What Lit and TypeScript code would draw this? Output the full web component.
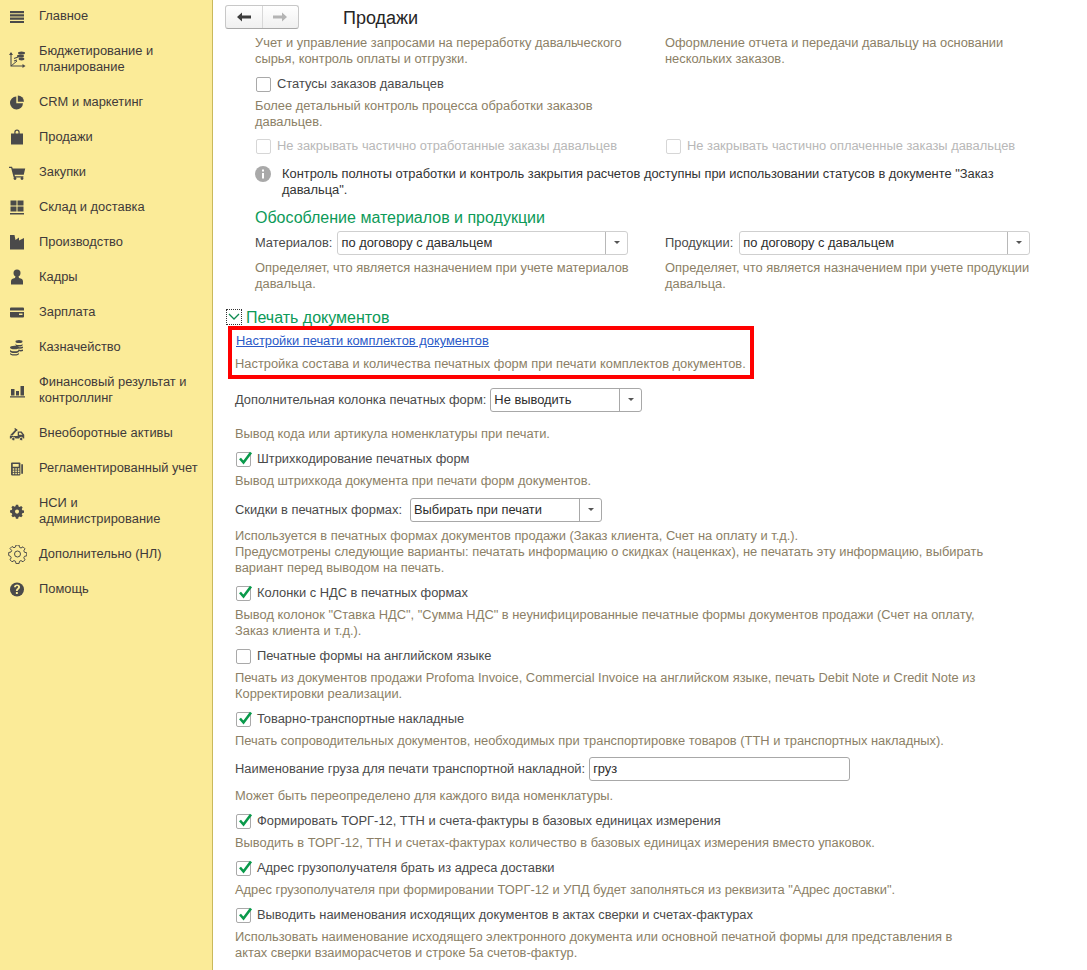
import { LitElement, html, css, svg } from "lit";
import { customElement } from "lit/decorators.js";

const icons: Record<string, unknown> = {
  menu: svg`<path d="M2 4.500h14v2.200H2zM2 7.800h14V10H2zM2 11.100h14v2.200H2zM2 14.400h14v2.200H2z" transform="translate(0 -.5)"/>`,
  budget: svg`<path d="M3 3v13h13" fill="none" stroke="currentColor" stroke-width="1.100"/><path d="M1 5l2-3 2 3zM14.500 14l3 2-3 2z"/><path d="M3 16l6-5" stroke="currentColor" stroke-width="1"/><path d="M6 8.500l4-1.500M6 11l3-1" stroke="currentColor" stroke-width="1.200"/><ellipse cx="13.500" cy="3" rx="3.500" ry="1.500"/><ellipse cx="12.500" cy="6" rx="3.500" ry="1.500"/><ellipse cx="13.500" cy="9" rx="3" ry="1.400"/>`,
  pie: svg`<path d="M8.300 3.500a6.500 6.500 0 1 0 6.700 6.700H8.300z"/><path d="M9.800 2.500v6.200h6.200a6.200 6.200 0 0 0-6.200-6.200z"/>`,
  bag: svg`<path d="M3 5.500h3.300V4.200a2.700 2.700 0 0 1 5.400 0v1.300H15v11H3z"/><path d="M7.600 5.500h2.800V4.200a1.400 1.400 0 0 0-2.800 0z" fill="#fbeb98"/>`,
  cart: svg`<path d="M0 3h3.400l.7 2H18l-1.600 7H6.200l.4 1.600H16V15H5.200L2.400 4.400H0z" transform="translate(1 1) scale(.9)"/><circle cx="7" cy="15.500" r="1.400"/><circle cx="14" cy="15.500" r="1.400"/>`,
  grid: svg`<path d="M2.500 2.500h6v5h-6zM9.500 2.500h6v5h-6zM2.500 8.500h6v5h-6zM9.500 8.500h6v5h-6zM2 15h14v1.500H2z"/>`,
  factory: svg`<path d="M2 2h4.500l1 5L11 4.500v3L16 5v11.500H2z"/>`,
  person: svg`<circle cx="9" cy="5" r="3.500"/><path d="M7.500 8h3l.5 2c2.500.4 4 1.300 4 3.500v3H3v-3c0-2.200 1.500-3.100 4-3.500z"/>`,
  card: svg`<path d="M3 4.500h12a1 1 0 0 1 1 1v2H2v-2a1 1 0 0 1 1-1zM2 9h14v4.500a1 1 0 0 1-1 1H3a1 1 0 0 1-1-1z"/><path d="M11 10.500h3.500V12H11z" fill="#fbeb98"/>`,
  coins: svg`<ellipse cx="11" cy="3.500" rx="3.500" ry="1.500"/><path d="M7.500 5.500a3.500 1.500 0 0 0 7 0V7a3.500 1.500 0 0 1-7 0zM9 8.500a3.500 1.500 0 0 0 6 0V10a3.500 1.500 0 0 1-6 0zM10.500 11.500a3.500 1.500 0 0 0 4.500 0V13a3.500 1.500 0 0 1-4.500 0z"/><ellipse cx="6.500" cy="9.500" rx="4.500" ry="1.800"/><path d="M2 11.500a4.500 1.800 0 0 0 9 0v1.700a4.500 1.800 0 0 1-9 0zM2 14.500a4.500 1.800 0 0 0 9 0v1.200a4.500 1.800 0 0 1-9 0z"/>`,
  bars: svg`<path d="M3 9.500h3.500V16H3zM8 11.500h3V16H8zM12.500 6.500H16V16h-3.500zM2 16.800h15V18H2z" transform="translate(0 -1.500)"/>`,
  truck: svg`<g transform="translate(1 1.500) scale(.87)"><path d="M1 11.500L8 4l1.600 1.200-5.600 6.300z"/><path d="M7 3l3 2.200-1.200 1L6 4z"/><path d="M10 7h4.500l3 3.500V15H1v-3h9zM11.500 8.300v2.400h4l-2-2.400z"/><circle cx="5" cy="15.500" r="2" stroke="#fbeb98"/><circle cx="14" cy="15.500" r="2" stroke="#fbeb98"/></g>`,
  calc: svg`<g transform="translate(.5 2.700) scale(.85 .76)"><path fill-rule="evenodd" d="M4 1h9a1 1 0 0 1 1 1v15a1 1 0 0 1-1 1H4a1 1 0 0 1-1-1V2a1 1 0 0 1 1-1zm1 2v3.500h7V3zM5 8.500v2h1.800v-2zm3 0v2h1.800v-2zm3 0v2h1.800v-2zM5 11.500v2h1.800v-2zm3 0v2h1.800v-2zm3 0v2h1.800v-2zM5 14.500v2h1.800v-2zm3 0v2h1.800v-2zm3 0v2h1.800v-2z"/><path d="M15 3.500h2V16h-2z"/></g>`,
  gear: svg`<path fill-rule="evenodd" d="M8 1.500h3l.5 2.300 1.500.7 2-1.200 2 2-1.200 2 .7 1.500 2.300.5v3l-2.300.5-.7 1.500 1.200 2-2 2-2-1.200-1.500.7-.5 2.300H8l-.5-2.300-1.500-.7-2 1.200-2-2 1.200-2-.7-1.500L.2 12V9l2.300-.5.700-1.500L2 5l2-2 2 1.200 1.500-.7zM9.500 8a2.700 2.700 0 1 0 0 5.400 2.700 2.700 0 0 0 0-5.400z" transform="translate(1.900 1.600) scale(.75)"/>`,
  gearo: svg`<path fill="none" stroke="currentColor" stroke-width="1" d="M8 1.500h3l.5 2.300 1.500.7 2-1.200 2 2-1.200 2 .7 1.500 2.300.5v3l-2.300.5-.7 1.500 1.200 2-2 2-2-1.200-1.500.7-.5 2.300H8l-.5-2.300-1.500-.7-2 1.200-2-2 1.200-2-.7-1.500L.7 12V9l2.300-.5.700-1.500L2 5l2-2 2 1.200 1.500-.7z" transform="translate(0 -1.500)"/><circle cx="9.500" cy="9" r="3" fill="none" stroke="currentColor"/>`,
  help: svg`<circle cx="9" cy="9.500" r="7"/><path d="M6 7.300c0-1.800 1.300-2.800 3.100-2.800s3 1 3 2.500c0 2.200-2.400 2.200-2.400 4H7.900c0-2.600 2.200-2.700 2.200-4 0-.6-.4-1-1-1-.7 0-1.100.5-1.100 1.300zM7.900 12h1.900v1.900H7.900z" fill="#fbeb98"/>`,
};

const nav: [string, string][] = [
  ["menu", "Главное"],
  ["budget", "Бюджетирование и планирование"],
  ["pie", "CRM и маркетинг"],
  ["bag", "Продажи"],
  ["cart", "Закупки"],
  ["grid", "Склад и доставка"],
  ["factory", "Производство"],
  ["person", "Кадры"],
  ["card", "Зарплата"],
  ["coins", "Казначейство"],
  ["bars", "Финансовый результат и контроллинг"],
  ["truck", "Внеоборотные активы"],
  ["calc", "Регламентированный учет"],
  ["gear", "НСИ и администрирование"],
  ["gearo", "Дополнительно (НЛ)"],
  ["help", "Помощь"],
];

@customElement("app-root")
export class AppRoot extends LitElement {
  static styles = css`
    :host {
      display: flex;
      width: 1087px;
      height: 970px;
      overflow: hidden;
      background: #fff;
      font: 12.880px/16px "Liberation Sans", Arial, sans-serif;
      color: #4a4a4a;
    }
    .side {
      width: 212px;
      flex: none;
      background: #fbeb98;
      border-right: 1px solid #c9b95c;
      overflow: hidden;
    }
    .nav {
      list-style: none;
      margin: -2px 0 0;
      padding: 0;
    }
    .nav li {
      display: flex;
      align-items: center;
      padding: 10px 0 9px 8px;
      color: #3f3a3a;
    }
    .nav li span {
      width: 160px;
    }
    .nav svg {
      width: 19px;
      height: 19px;
      flex: none;
      margin: -2px 12px -2px 0;
      fill: #4a4a4a;
      color: #4a4a4a;
    }
    .main {
      flex: 1;
      min-width: 0;
      overflow: hidden;
    }
    .top {
      height: 35px;
      display: flex;
      align-items: flex-start;
      padding-left: 12px;
      box-sizing: border-box;
    }
    .navbtn {
      margin-top: 5px;
      width: 74px;
      height: 24px;
      box-sizing: border-box;
      display: flex;
      border: 1px solid #c8c8c8;
      border-bottom-color: #a8a8a8;
      border-radius: 3px;
      background: linear-gradient(#fff, #f0f0f0);
    }
    .navbtn span {
      flex: 1;
      display: flex;
      align-items: center;
      justify-content: center;
    }
    .navbtn span + span {
      border-left: 1px solid #d8d8d8;
    }
    .navbtn svg {
      width: 14px;
      height: 10px;
    }
    .title {
      margin: 7px 0 0 44px;
      font-size: 18px;
      line-height: 22px;
      color: #262626;
    }
    .body {
      padding-left: 22px;
    }
    .upper {
      padding-left: 20px;
    }
    .cols {
      display: grid;
      grid-template-columns: 410px 1fr;
    }
    .desc {
      color: #8c7f66;
    }
    .check {
      display: flex;
      align-items: center;
      height: 22px;
      gap: 6px;
    }
    .box {
      width: 15px;
      height: 15px;
      box-sizing: border-box;
      border: 1px solid #a9a9a9;
      border-radius: 2px;
      background: #fff;
      position: relative;
      flex: none;
      margin-left: 1px;
    }
    .box svg {
      position: absolute;
      left: 0;
      top: -3px;
      width: 16px;
      height: 16px;
    }
    .off {
      color: #b8b8b8;
    }
    .off .box {
      border-color: #d6d6d6;
    }
    .info {
      display: flex;
      gap: 11px;
      color: #333;
    }
    .info svg {
      width: 16px;
      height: 16px;
      flex: none;
    }
    h2 {
      margin: 0;
      font-weight: 400;
      font-size: 16px;
      line-height: 22px;
      color: #0d9a58;
    }
    .field {
      display: flex;
      align-items: center;
      gap: 4px;
    }
    .field.g5 { gap: 5px; }
    .field.g6 { gap: 6px; }
    .field.g8 { gap: 8px; }
    .sel {
      height: 24px;
      box-sizing: border-box;
      border: 1px solid #a8a8a8;
      border-radius: 3px;
      display: flex;
      align-items: center;
      padding-left: 3px;
      color: #2c2c2c;
      position: relative;
    }
    .sel.light {
      border-color: #cfcfcf;
    }
    .sel.arrow::after {
      content: "";
      position: absolute;
      right: 0;
      top: 0;
      bottom: 0;
      width: 21px;
      border-left: 1px solid #a8a8a8;
    }
    .sel.light.arrow::after {
      border-left-color: #b8b8b8;
    }
    .sel.arrow::before {
      content: "";
      position: absolute;
      right: 7px;
      top: 9px;
      border: 3px solid transparent;
      border-top: 3px solid #555;
      border-bottom: 0;
    }
    .w-mat { width: 291px; }
    .w-prod { width: 291px; }
    .w-none { width: 152px; }
    .w-sk { width: 192px; }
    .w-in { width: 261px; }
    .grp {
      display: flex;
      align-items: flex-start;
      gap: 4px;
      height: 17px;
      margin-left: -29px;
      margin-top: 17px;
    }
    .grp h2 {
      line-height: 18px;
    }
    .grp .tw {
      width: 16px;
      height: 16px;
      box-sizing: border-box;
      border: 1px dotted #333;
      display: flex;
      align-items: center;
      justify-content: center;
    }
    .grp .tw svg {
      width: 12px;
      height: 8px;
    }
    .red {
      margin: 0 0 0 -7px;
      width: 526px;
      height: 53px;
      box-sizing: border-box;
      border: 4px solid #f00;
      padding: 3px 0 0 3px;
      position: relative;
    }
    .link {
      color: #2a5ac8;
      text-decoration: underline;
      padding-left: 1px;
    }
    .red .desc {
      margin-top: 7px;
    }
    .m2 { margin-top: 2px; }
    .m3 { margin-top: 3px; }
    .m5 { margin-top: 5px; }
    .m6 { margin-top: 6px; }
    .m7 { margin-top: 7px; }
    .m8 { margin-top: 8px; }
    .m9 { margin-top: 9px; }
    .m14 { margin-top: 14px; }
  `;

  private tick() {
    return svg`<svg viewBox="0 0 16 16"><path d="M3 8.500l3.500 4L14 2.500" fill="none" stroke="#0a9a4b" stroke-width="2.600"/></svg>`;
  }

  private check(label: string, on: boolean, cls = "m6") {
    return html`<div class="check ${cls}"><span class="box">${on ? this.tick() : ""}</span><span>${label}</span></div>`;
  }

  private field(label: string, value: string, cls: string, mt: string) {
    return html`<div class="field ${mt}"><span>${label}</span><div class="sel arrow ${cls}">${value}</div></div>`;
  }

  render() {
    return html`
      <aside class="side">
        <ul class="nav">
          ${nav.map(([i, t]) => html`<li><svg viewBox="0 0 19 19">${icons[i]}</svg><span>${t}</span></li>`)}
        </ul>
      </aside>
      <main class="main">
        <header class="top">
          <div class="navbtn">
            <span><svg viewBox="0 0 14 10"><path d="M0 5l5-4.500V3.500h9v3H5v3z" fill="#3d3d3d"/></svg></span>
            <span><svg viewBox="0 0 14 10"><path d="M14 5L9 .5V3.500H0v3h9v3z" fill="#b4b4b4"/></svg></span>
          </div>
          <div class="title">Продажи</div>
        </header>
        <div class="body">
          <div class="upper">
            <div class="cols">
              <div class="desc">Учет и управление запросами на переработку давальческого<br />сырья, контроль оплаты и отгрузки.</div>
              <div class="desc">Оформление отчета и передачи давальцу на основании<br />нескольких заказов.</div>
            </div>
            ${this.check("Статусы заказов давальцев", false)}
            <div class="desc m3">Более детальный контроль процесса обработки заказов<br />давальцев.</div>
            <div class="cols m5">
              <div class="check off"><span class="box"></span><span>Не закрывать частично отработанные заказы давальцев</span></div>
              <div class="check off"><span class="box"></span><span>Не закрывать частично оплаченные заказы давальцев</span></div>
            </div>
            <div class="info m9">
              <svg viewBox="0 0 16 16"><circle cx="8" cy="8" r="8" fill="#a9a9a9"/><path d="M7 3.500h2v2H7zM7 7h2v5.500H7z" fill="#fff"/></svg>
              <div>Контроль полноты отработки и контроль закрытия расчетов доступны при использовании статусов в документе "Заказ<br />давальца".</div>
            </div>
            <h2 class="m9">Обособление материалов и продукции</h2>
            <div class="cols m2">
              <div class="field g5"><span>Материалов:</span><div class="sel arrow light w-mat">по договору с давальцем</div></div>
              <div class="field g6"><span>Продукции:</span><div class="sel arrow light w-prod">по договору с давальцем</div></div>
            </div>
            <div class="cols m5">
              <div class="desc">Определяет, что является назначением при учете материалов<br />давальца.</div>
              <div class="desc">Определяет, что является назначением при учете продукции<br />давальца.</div>
            </div>
            <div class="grp">
              <span class="tw"><svg viewBox="0 0 12 8"><path d="M1 1l5 5 5-5" fill="none" stroke="#0d8a50" stroke-width="1.300"/></svg></span>
              <h2>Печать документов</h2>
            </div>
          </div>
          <section class="red">
            <div class="link">Настройки печати комплектов документов</div>
            <div class="desc">Настройка состава и количества печатных форм при печати комплектов документов.</div>
          </section>
          ${this.field("Дополнительная колонка печатных форм:", "Не выводить", "w-none", "m9")}
          <div class="desc m14">Вывод кода или артикула номенклатуры при печати.</div>
          ${this.check("Штрихкодирование печатных форм", true)}
          <div class="desc m3">Вывод штрихкода документа при печати форм документов.</div>
          ${this.field("Скидки в печатных формах:", "Выбирать при печати", "w-sk", "m9 g8")}
          <div class="desc m6">Используется в печатных формах документов продажи (Заказ клиента, Счет на оплату и т.д.).<br />Предусмотрены следующие варианты: печатать информацию о скидках (наценках), не печатать эту информацию, выбирать<br />вариант перед выводом на печать.</div>
          ${this.check("Колонки с НДС в печатных формах", true)}
          <div class="desc m3">Вывод колонок "Ставка НДС", "Сумма НДС" в неунифицированные печатные формы документов продажи (Счет на оплату,<br />Заказ клиента и т.д.).</div>
          ${this.check("Печатные формы на английском языке", false)}
          <div class="desc m3">Печать из документов продажи Profoma Invoice, Commercial Invoice на английском языке, печать Debit Note и Credit Note из<br />Корректировки реализации.</div>
          ${this.check("Товарно-транспортные накладные", true)}
          <div class="desc m3">Печать сопроводительных документов, необходимых при транспортировке товаров (ТТН и транспортных накладных).</div>
          <div class="field m8"><span>Наименование груза для печати транспортной накладной:</span><div class="sel w-in">груз</div></div>
          <div class="desc m7">Может быть переопределено для каждого вида номенклатуры.</div>
          ${this.check("Формировать ТОРГ-12, ТТН и счета-фактуры в базовых единицах измерения", true)}
          <div class="desc m3">Выводить в ТОРГ-12, ТТН и счетах-фактурах количество в базовых единицах измерения вместо упаковок.</div>
          ${this.check("Адрес грузополучателя брать из адреса доставки", true)}
          <div class="desc m3">Адрес грузополучателя при формировании ТОРГ-12 и УПД будет заполняться из реквизита "Адрес доставки".</div>
          ${this.check("Выводить наименования исходящих документов в актах сверки и счетах-фактурах", true)}
          <div class="desc m3">Использовать наименование исходящего электронного документа или основной печатной формы для представления в<br />актах сверки взаиморасчетов и строке 5а счетов-фактур.</div>
        </div>
      </main>
    `;
  }
}
